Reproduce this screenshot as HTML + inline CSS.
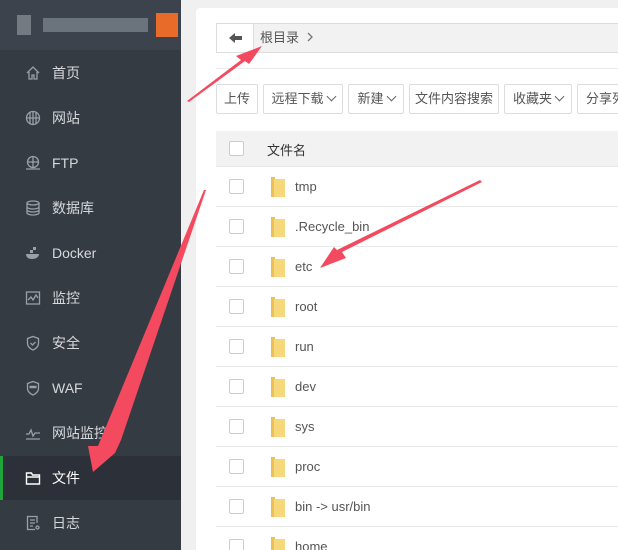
<!DOCTYPE html>
<html><head><meta charset="utf-8"><style>
*{margin:0;padding:0;box-sizing:border-box}
html,body{width:618px;height:550px;overflow:hidden}
body{background:#f0f0f0;font-family:"Liberation Sans","Noto Sans CJK SC",sans-serif;position:relative}
.sb{position:absolute;left:0;top:0;width:181px;height:550px;background:#353b43}
.sbh{height:50px;background:#3c434c;position:relative}
.it{position:absolute;left:0;width:181px;height:44px;color:#d6d9dc;font-size:14px;line-height:44px;padding-left:52px}
.it svg{position:absolute;left:25px;top:14px}
.act{background:#2c3038;color:#fff;border-left:3px solid #20a53a;padding-left:49px}
.act svg{left:22px}
.card{position:absolute;left:196px;top:8px;width:430px;height:560px;background:#fff;border-radius:4px}
.bc{position:absolute;left:216px;top:23px;width:410px;height:30px;border:1px solid #ddd;background:#f2f2f2}
.bk{position:absolute;left:0;top:0;width:37px;height:28px;background:#fff;border-right:1px solid #ddd}
.btn{position:absolute;top:84px;height:30px;border:1px solid #ddd;border-radius:2px;font-size:13px;color:#555;line-height:28px;text-align:center;background:#fff;white-space:nowrap;overflow:hidden}
.th{position:absolute;left:216px;top:131px;width:410px;height:36px;background:#f2f2f2;border-bottom:1px solid #e6e6e6}
.cb{position:absolute;width:15px;height:15px;border:1px solid #ccc;border-radius:2px;background:#fff}
.row{position:absolute;left:216px;width:410px;height:40px;border-bottom:1px solid #eaeaea;font-size:13px;color:#555}
.row .cb{left:13px;top:12px}
.row .nm{position:absolute;left:79px;top:12px}
.fd{position:absolute;left:53px;top:9px;width:18px;height:22px}
.ch{display:inline-block;width:7px;height:7px;border-right:1.3px solid #666;border-bottom:1.3px solid #666;transform:rotate(45deg);margin-left:4px;position:relative;top:-3px}
</style></head><body>
<div class="sb">
 <div class="sbh">
  <div style="position:absolute;left:17px;top:15px;width:14px;height:20px;background:#9aa0a6;opacity:.6"></div>
  <div style="position:absolute;left:43px;top:18px;width:105px;height:14px;background:#6b737c"></div>
  <div style="position:absolute;left:156px;top:13px;width:22px;height:24px;background:#e86b2a"></div>
 </div>
 <div class="it" style="top:51px"><svg width="16" height="16" fill="none" stroke="#9aa0a6" stroke-width="1.3"><path d="M2 8L8 2l6 6M4 7v7h3v-4h2v4h3V7"/></svg>首页</div>
 <div class="it" style="top:96px"><svg width="16" height="16" fill="none" stroke="#9aa0a6" stroke-width="1.3"><circle cx="8" cy="8" r="6.5"/><path d="M1.5 8h13M8 1.5v13M5 2.5v11M11 2.5v11"/></svg>网站</div>
 <div class="it" style="top:141px"><svg width="16" height="16" fill="none" stroke="#9aa0a6" stroke-width="1.3"><circle cx="8" cy="7" r="5.5"/><path d="M2.5 7h11M8 1.5v11M1 14h14"/></svg>FTP</div>
 <div class="it" style="top:186px"><svg width="16" height="16" fill="none" stroke="#9aa0a6" stroke-width="1.3"><ellipse cx="8" cy="3" rx="6" ry="2"/><path d="M2 3v10c0 1 3 2 6 2s6-1 6-2V3M2 7c0 1 3 2 6 2s6-1 6-2M2 10c0 1 3 2 6 2s6-1 6-2"/></svg>数据库</div>
 <div class="it" style="top:231px"><svg width="16" height="16"><path d="M1 9h13c0 3-3 5-7 5S1 12 1 9z" fill="#9aa0a6"/><rect x="5" y="5" width="3" height="3" fill="#9aa0a6"/><rect x="8" y="2" width="3" height="3" fill="#9aa0a6"/></svg>Docker</div>
 <div class="it" style="top:276px"><svg width="16" height="16" fill="none" stroke="#9aa0a6" stroke-width="1.3"><rect x="1.5" y="2" width="13" height="12"/><path d="M3 10l3-3 2 3 3-5 2 3"/></svg>监控</div>
 <div class="it" style="top:321px"><svg width="16" height="16" fill="none" stroke="#9aa0a6" stroke-width="1.3"><path d="M8 1.5l5.5 2v5c0 3-3 5.5-5.5 6.5-2.5-1-5.5-3.5-5.5-6.5v-5z"/><path d="M5.5 8l2 2 3-3"/></svg>安全</div>
 <div class="it" style="top:366px"><svg width="16" height="16" fill="none" stroke="#9aa0a6" stroke-width="1.3"><path d="M8 1.5l5.5 2v5c0 3-3 5.5-5.5 6.5-2.5-1-5.5-3.5-5.5-6.5v-5z"/><path d="M4.5 7h7" stroke-width="2.5"/></svg>WAF</div>
 <div class="it" style="top:411px"><svg width="16" height="16" fill="none" stroke="#9aa0a6" stroke-width="1.3"><path d="M1 9h3l2-4 2 6 2-3h5M1 14h14"/></svg>网站监控</div>
 <div class="it act" style="top:456px"><svg width="16" height="16" fill="none" stroke="#fff" stroke-width="1.4"><path d="M1.5 3h5l1 2h7v9h-13z M1.5 7h13"/></svg>文件</div>
 <div class="it" style="top:501px"><svg width="16" height="16" fill="none" stroke="#9aa0a6" stroke-width="1.3"><path d="M12 8V1.5H2.5v13H10M5 5h5M5 8h5M5 11h3"/><circle cx="12.5" cy="12.5" r="1.5"/></svg>日志</div>
</div>
<div class="card"></div>
<div class="bc"><div class="bk"><svg width="37" height="28"><path d="M12 14l6-5v3h7v4h-7v3z" fill="#555"/></svg></div>
<span style="position:absolute;left:43px;top:5px;font-size:13px;color:#555;line-height:18px">根目录</span>
<svg style="position:absolute;left:89px;top:8px" width="8" height="10"><path d="M2 1l4 4-4 4" fill="none" stroke="#777" stroke-width="1.3"/></svg></div>
<div style="position:absolute;left:216px;top:68px;width:410px;border-top:1px solid #eaeaea"></div>
<div class="btn" style="left:216px;width:42px">上传</div>
<div class="btn" style="left:263px;width:80px">远程下载<span class="ch"></span></div>
<div class="btn" style="left:348px;width:56px">新建<span class="ch"></span></div>
<div class="btn" style="left:409px;width:90px">文件内容搜索</div>
<div class="btn" style="left:504px;width:68px">收藏夹<span class="ch"></span></div>
<div class="btn" style="left:577px;width:60px;text-align:left;padding-left:8px">分享列表</div>
<div class="th"><div class="cb" style="left:13px;top:10px"></div><span style="position:absolute;left:51px;top:9px;font-size:13px;color:#333">文件名</span></div>
<div class="row" style="top:167px"><div class="cb"></div><svg class="fd"><path d="M2 1h4v20H2z" fill="#e9c157"/><path d="M5 3h11v18H5z" fill="#f6d87a"/></svg><span class="nm">tmp</span></div>
<div class="row" style="top:207px"><div class="cb"></div><svg class="fd"><path d="M2 1h4v20H2z" fill="#e9c157"/><path d="M5 3h11v18H5z" fill="#f6d87a"/></svg><span class="nm">.Recycle_bin</span></div>
<div class="row" style="top:247px"><div class="cb"></div><svg class="fd"><path d="M2 1h4v20H2z" fill="#e9c157"/><path d="M5 3h11v18H5z" fill="#f6d87a"/></svg><span class="nm">etc</span></div>
<div class="row" style="top:287px"><div class="cb"></div><svg class="fd"><path d="M2 1h4v20H2z" fill="#e9c157"/><path d="M5 3h11v18H5z" fill="#f6d87a"/></svg><span class="nm">root</span></div>
<div class="row" style="top:327px"><div class="cb"></div><svg class="fd"><path d="M2 1h4v20H2z" fill="#e9c157"/><path d="M5 3h11v18H5z" fill="#f6d87a"/></svg><span class="nm">run</span></div>
<div class="row" style="top:367px"><div class="cb"></div><svg class="fd"><path d="M2 1h4v20H2z" fill="#e9c157"/><path d="M5 3h11v18H5z" fill="#f6d87a"/></svg><span class="nm">dev</span></div>
<div class="row" style="top:407px"><div class="cb"></div><svg class="fd"><path d="M2 1h4v20H2z" fill="#e9c157"/><path d="M5 3h11v18H5z" fill="#f6d87a"/></svg><span class="nm">sys</span></div>
<div class="row" style="top:447px"><div class="cb"></div><svg class="fd"><path d="M2 1h4v20H2z" fill="#e9c157"/><path d="M5 3h11v18H5z" fill="#f6d87a"/></svg><span class="nm">proc</span></div>
<div class="row" style="top:487px"><div class="cb"></div><svg class="fd"><path d="M2 1h4v20H2z" fill="#e9c157"/><path d="M5 3h11v18H5z" fill="#f6d87a"/></svg><span class="nm">bin -&gt; usr/bin</span></div>
<div class="row" style="top:527px"><div class="cb"></div><svg class="fd"><path d="M2 1h4v20H2z" fill="#e9c157"/><path d="M5 3h11v18H5z" fill="#f6d87a"/></svg><span class="nm">home</span></div>
<svg style="position:absolute;left:0;top:0" width="618" height="550">
<g fill="#f44a5f">
<path d="M187 101L241 60 236 56 262 46 249 64 245 61 189 102z"/>
<path d="M482 182L342 252 346 258 320 268 334 247 337 250 480 180z"/>
<path d="M206 190L121 440 115 453 93 472 88 446 98 446 204 190z"/>
</g></svg>
</body></html>
